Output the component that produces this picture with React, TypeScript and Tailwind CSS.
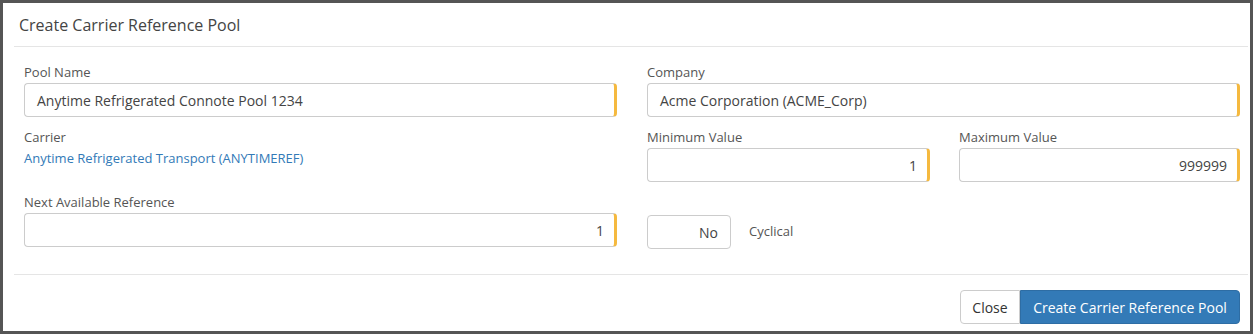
import React from 'react';

const font = { fontFamily: '"Open Sans", "Liberation Sans", sans-serif' };

interface FieldProps {
  label?: string;
  value: string;
  align?: 'left' | 'right';
}

const Field: React.FC<FieldProps> = ({ label, value, align = 'left' }) => (
  <div className="flex flex-col">
    {label && <label className="h-[17px] text-[13px] leading-[17px] text-[#555] mb-[2px]">{label}</label>}
    <div
      className={`h-[34px] flex items-center rounded-[4px] border border-[#ccc] border-r-[3px] border-r-[#f5b93f] text-[14px] text-[#444] ${
        align === 'right' ? 'justify-end pr-[10px]' : 'pl-[12px]'
      }`}
    >
      {value}
    </div>
  </div>
);

export default function App() {
  return (
    <div className="w-[1253px] h-[334px] border-[3px] border-[#555] bg-white overflow-hidden" style={font}>
      <div className="pl-[11px] pr-[2px]">
        <div className="h-[44px] flex items-center pl-[5px] text-[16px] text-[#444] border-b border-[#e5e5e5]">
          Create Carrier Reference Pool
        </div>

        <div className="pl-[10px] pr-[8px] pt-[17px] grid grid-cols-2 gap-x-[30px]">
          {/* left column */}
          <div className="flex flex-col">
            <div className="mb-[12px]">
              <Field label="Pool Name" value="Anytime Refrigerated Connote Pool 1234" />
            </div>
            <div className="h-[53px] mb-[12px] flex flex-col">
              <span className="h-[17px] text-[13px] leading-[17px] text-[#555]">Carrier</span>
              <a className="mt-[4px] text-[13px] leading-[17px] text-[#337ab7]">Anytime Refrigerated Transport (ANYTIMEREF)</a>
            </div>
            <Field label="Next Available Reference" value="1" align="right" />
          </div>

          {/* right column */}
          <div className="flex flex-col">
            <div className="mb-[12px]">
              <Field label="Company" value="Acme Corporation (ACME_Corp)" />
            </div>
            <div className="grid grid-cols-[283px_1fr] gap-x-[29px] mb-[12px]">
              <Field label="Minimum Value" value="1" align="right" />
              <Field label="Maximum Value" value="999999" align="right" />
            </div>
            <div className="mt-[21px] flex items-center">
              <div className="w-[84px] h-[34px] flex items-center justify-end pr-[12px] rounded-[4px] border border-[#ccc] text-[14px] text-[#444]">
                No
              </div>
              <span className="ml-[18px] text-[13px] text-[#555]">Cyclical</span>
            </div>
          </div>
        </div>

        <div className="mt-[25px] border-t border-[#e5e5e5] pt-[15px] pr-[8px] flex justify-end">
          <button className="h-[34px] w-[60px] rounded-l-[4px] border border-[#ccc] bg-white text-[14px] text-[#333]">
            Close
          </button>
          <button className="h-[34px] w-[220px] rounded-r-[4px] border border-[#2e6da4] bg-[#337ab7] text-[14px] text-white">
            Create Carrier Reference Pool
          </button>
        </div>
      </div>
    </div>
  );
}
